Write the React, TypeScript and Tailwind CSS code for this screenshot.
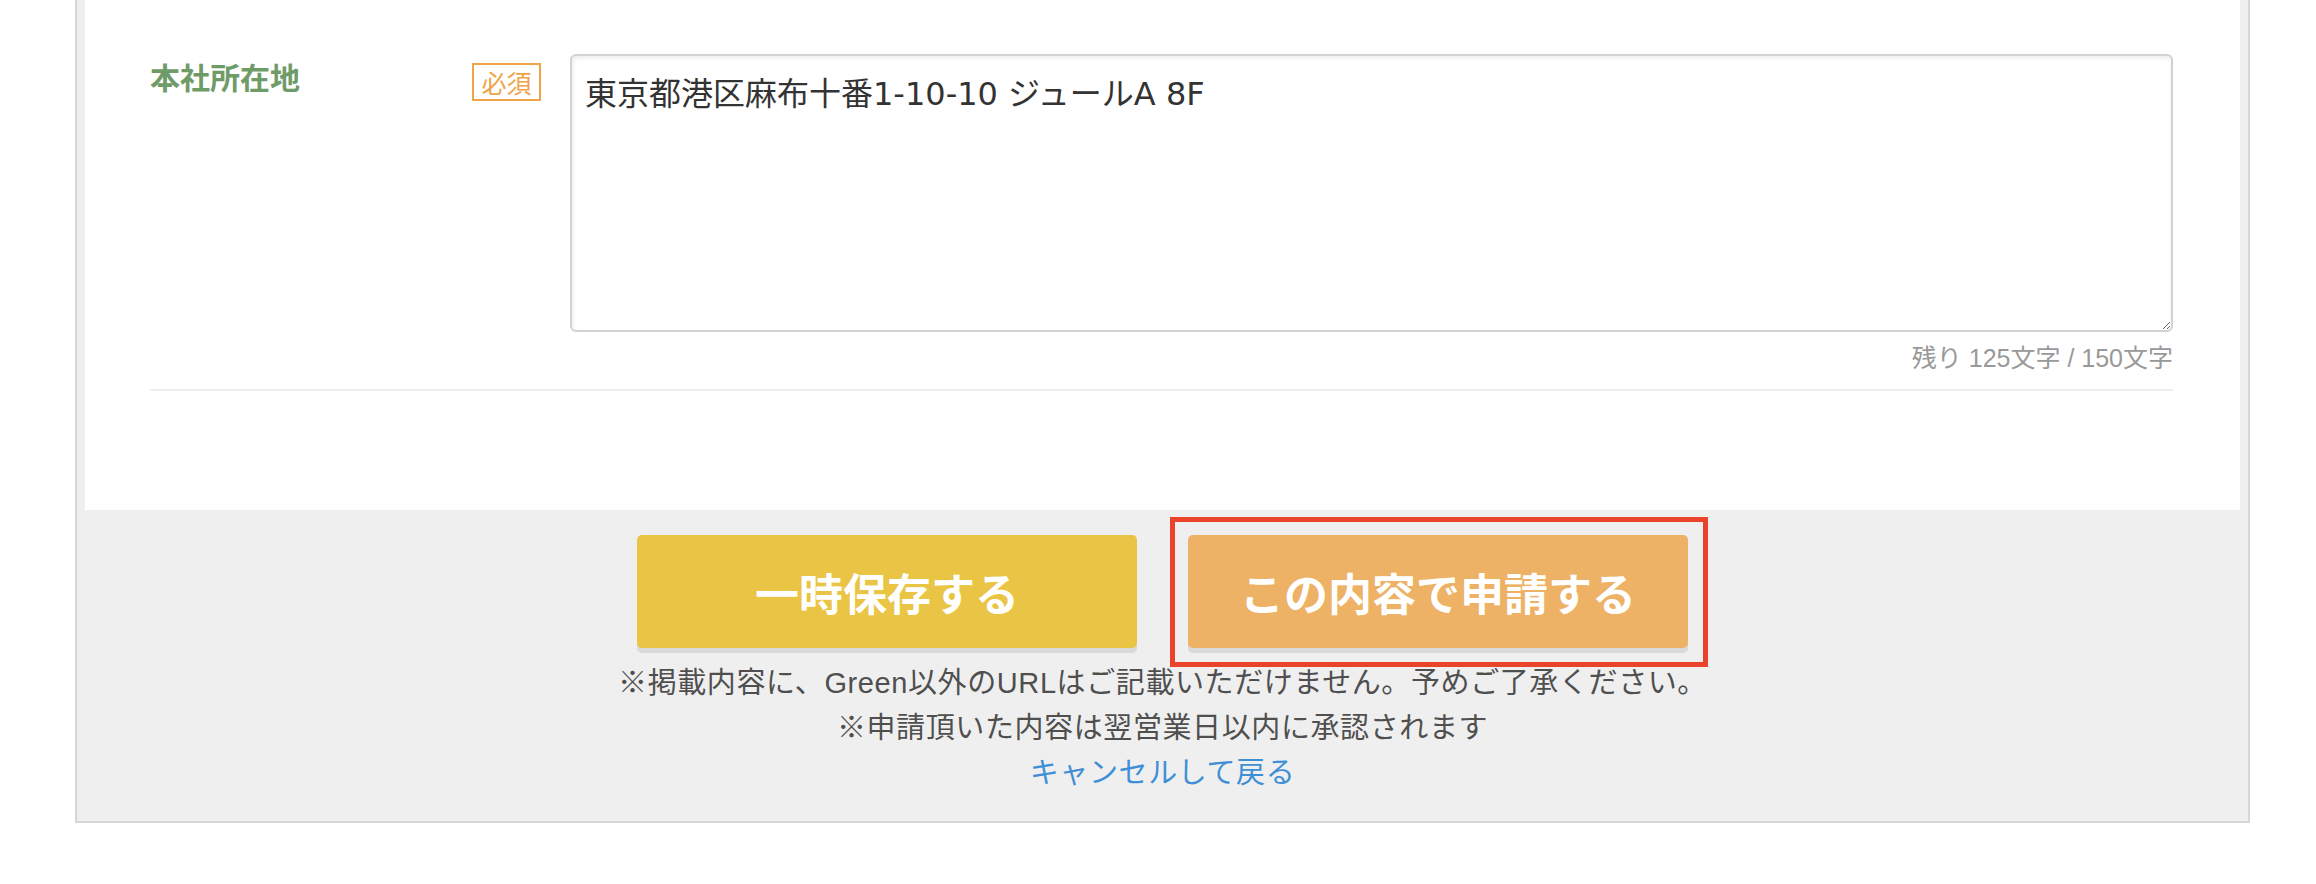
const jp = "font-['Noto_Sans_CJK_JP',sans-serif]";

export default function App() {
  return (
    <div className="h-[884px] w-full overflow-hidden bg-white font-['Liberation_Sans','Noto_Sans_CJK_JP',sans-serif]">
      <div className="ml-[75px] w-[2175px] border-x-2 border-b-2 border-[#d6d6d6] bg-[#efefef] px-[8px]">
        {/* form panel */}
        <div className="bg-white pt-[54px] pb-[119px] pl-[65px] pr-[67px]">
          <div className="flex items-start">
            <div className={`w-[322px] text-[30px] leading-[45px] font-bold text-[#6f9b68] ${jp}`}>
              本社所在地
            </div>
            <span className={`mt-[9px] flex h-[38px] w-[69px] shrink-0 items-center justify-center border-2 border-[#f0a44a] text-[25px] leading-none text-[#f0a44a] ${jp}`}>
              必須
            </span>
            <textarea
              defaultValue="東京都港区麻布十番1-10-10 ジュールA 8F"
              className="ml-[29px] h-[278px] flex-1 rounded-[6px] border-2 border-[#d2d2d2] bg-white pt-[14px] pl-[13px] pr-[13px] font-['DejaVu_Sans','Noto_Sans_CJK_JP',sans-serif] text-[32px] leading-[48px] text-[#333] shadow-[inset_1px_2px_4px_rgba(0,0,0,0.08)] outline-none"
            />
          </div>
          <p className="mt-[8px] text-right text-[25px] leading-[36px] text-[#999]">
            残り 125文字 / 150文字
          </p>
          <div className="mt-[13px] h-[2px] bg-[#efefef]" />
        </div>

        {/* actions */}
        <div className="pt-[25px] pb-[25px]">
          <div className="flex justify-center gap-[51px]">
            <button className={`flex h-[113px] w-[500px] items-center justify-center rounded-[5px] bg-[#eac444] text-[44px] font-bold text-white shadow-[0_5px_0_#d9d9d9] ${jp}`}>
              一時保存する
            </button>
            <div className="relative">
              <button className={`flex h-[113px] w-[500px] items-center justify-center rounded-[5px] bg-[#edb265] text-[44px] font-bold text-white shadow-[0_5px_0_#d9d9d9] ${jp}`}>
                この内容で申請する
              </button>
              <div className="pointer-events-none absolute -top-[18px] -left-[18px] -right-[20px] -bottom-[19px] border-[5px] border-[#e9432b]" />
            </div>
          </div>
          <div className="mt-[13px] text-center text-[29px] leading-[45px] tracking-[0.6px] text-[#4f4f4f]">
            <p>※掲載内容に、Green以外のURLはご記載いただけません。予めご了承ください。</p>
            <p>※申請頂いた内容は翌営業日以内に承認されます</p>
            <p>
              <a href="#" className="text-[#3f8fd6]">キャンセルして戻る</a>
            </p>
          </div>
        </div>
      </div>
    </div>
  );
}
